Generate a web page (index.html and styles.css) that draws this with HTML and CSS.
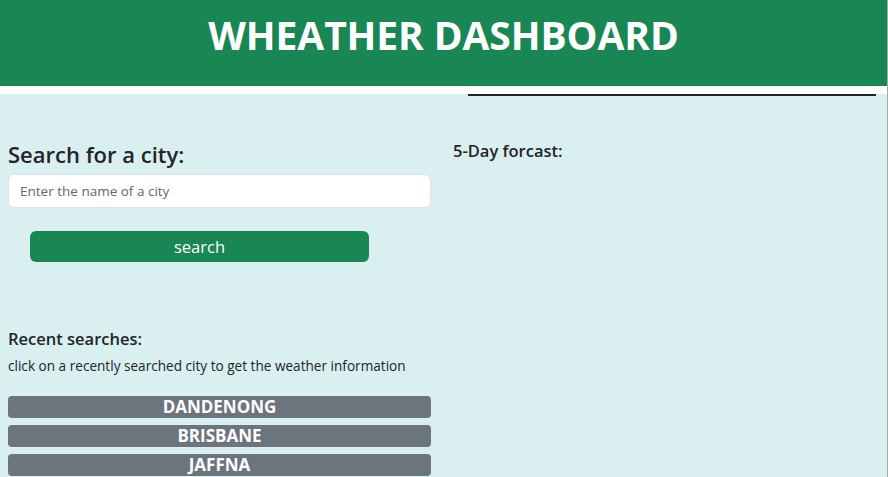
FILE: index.html
```html
<!DOCTYPE html>
<html>
<head>
<meta charset="utf-8">
<link rel="stylesheet" href="styles.css">
</head>
<body>
<header class="top">
  <h1 class="title">WHEATHER DASHBOARD</h1>
</header>
<main class="main">
  <section class="left">
    <h2 class="search-title">Search for a city:</h2>
    <input class="city-input" type="text" placeholder="Enter the name of a city">
    <button class="search-btn">search</button>
    <h5 class="recent-title">Recent searches:</h5>
    <p class="hint">click on a recently searched city to get the weather information</p>
    <div class="cities">
      <button class="city">DANDENONG</button>
      <button class="city">BRISBANE</button>
      <button class="city">JAFFNA</button>
    </div>
  </section>
  <section class="right">
    <div class="rule"></div>
    <h5 class="forecast-title">5-Day forcast:</h5>
  </section>
</main>
</body>
</html>
```

FILE: styles.css
```css
* { box-sizing: border-box; }
html, body { margin: 0; padding: 0; }
body {
  font-family: "Open Sans", "Noto Sans", sans-serif;
  color: #212529;
  background: #ffffff;
  width: 888px;
  height: 477px;
  overflow: hidden;
  border-right: 1px solid #a9a9a9;
}
.top {
  background: #198754;
  height: 86px;
  display: flex;
  justify-content: center;
  padding-top: 11px;
}
.title {
  margin: 0;
  color: #ffffff;
  font-size: 39px;
  font-weight: 700;
  line-height: 48px;
  letter-spacing: -0.1px;
}
.main {
  margin-top: 8px;
  background: #daeff0;
  height: 383px;
  display: flex;
}
.left {
  width: 441px;
  padding: 45px 10px 0 8px;
}
.right {
  flex: 1;
  padding: 0 11px 0 12px;
}
.rule {
  height: 2px;
  background: #212529;
  margin-left: 15px;
}
.search-title {
  margin: 0;
  font-size: 22px;
  font-weight: 600;
  line-height: 30px;
}
.city-input {
  display: block;
  width: 423px;
  height: 34px;
  margin-top: 5px;
  border: 1px solid #dee2e6;
  border-radius: 6px;
  padding: 0 11px;
  font-family: inherit;
  font-size: 13.5px;
  background: #fff;
  outline: none;
}
.city-input::placeholder { color: #6b6470; }
.search-btn {
  display: block;
  width: 339px;
  height: 31px;
  margin: 23px 0 0 22px;
  background: #198754;
  border: none;
  border-radius: 6px;
  color: #fff;
  font-family: inherit;
  font-size: 16.5px;
  padding: 0;
}
.recent-title {
  margin: 66px 0 0 0;
  font-size: 16.5px;
  font-weight: 600;
  line-height: 22px;
}
.hint {
  margin: 7px 0 0 0;
  font-size: 13.6px;
  line-height: 18px;
}
.cities {
  margin-top: 21px;
  display: flex;
  flex-direction: column;
  gap: 7px;
}
.city {
  width: 423px;
  height: 22px;
  padding: 0;
  background: #6c757d;
  border: none;
  border-radius: 4px;
  color: #fff;
  font-family: inherit;
  font-size: 17px;
  font-weight: 700;
  line-height: 22px;
}
.forecast-title {
  margin: 44px 0 0 0;
  font-size: 16.5px;
  font-weight: 600;
  line-height: 22px;
}
```
